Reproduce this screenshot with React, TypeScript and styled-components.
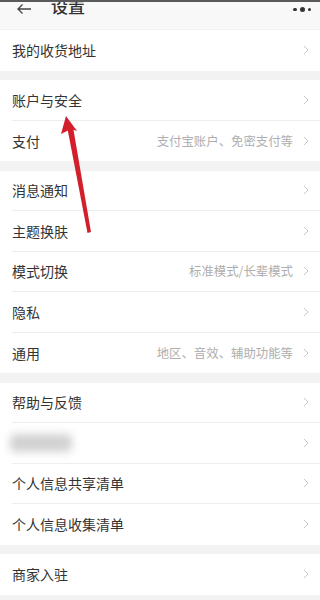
import React from "react";
import styled, { createGlobalStyle } from "styled-components";

const Global = createGlobalStyle`
  html, body { margin: 0; padding: 0; background: #f2f2f2; }
  body { font-family: "Noto Sans CJK SC", "Noto Sans", sans-serif; }
  * { box-sizing: border-box; }
`;

const Page = styled.div`
  position: relative;
  width: 320px;
  height: 600px;
  overflow: hidden;
  background: #f2f2f2;
  display: flex;
  flex-direction: column;
`;

const TopEdge = styled.div`
  height: 2px;
  background: #5a5a5a;
  flex: none;
`;

const Header = styled.div`
  height: 27px;
  flex: none;
  background: #f8f8f8;
  display: flex;
  align-items: flex-start;
  padding: 0 9px 0 16px;
  overflow: hidden;
`;

const Back = styled.div`
  width: 18px;
  height: 14px;
  margin-top: 1px;
  display: flex;
`;

const Title = styled.div`
  margin-left: 17px;
  margin-top: -7px;
  font-size: 17px;
  line-height: 22px;
  color: #333;
  font-weight: 500;
  flex: 1;
`;

const Dots = styled.div`
  display: flex;
  align-items: center;
  gap: 3px;
  margin-top: 5px;
`;

const Dot = styled.span<{ $big?: boolean }>`
  width: ${(p) => (p.$big ? 5 : 3.5)}px;
  height: ${(p) => (p.$big ? 5 : 3.5)}px;
  border-radius: 50%;
  background: #333;
`;

const Groups = styled.div`
  display: flex;
  flex-direction: column;
  gap: 9.5px;
  padding-top: 1px;
`;

const Group = styled.div`
  background: #fff;
  display: flex;
  flex-direction: column;
`;

const Row = styled.div<{ $last?: boolean }>`
  height: 40.5px;
  margin-left: 12px;
  padding-right: 11px;
  display: flex;
  align-items: center;
  border-bottom: ${(p) => (p.$last ? "none" : "1px solid #eeeeee")};
`;

const Label = styled.div`
  flex: 1;
  font-size: 14px;
  color: #333;
`;

const Hint = styled.div`
  font-size: 12.4px;
  color: #aeaeae;
  margin-right: 10px;
`;

const Blur = styled.div`
  width: 62px;
  height: 18px;
  margin-left: -2px;
  background: #d2d2d2;
  border-radius: 5px;
  filter: blur(4px);
`;

const Spacer = styled.div`
  flex: 1;
`;

const ArrowLayer = styled.svg`
  position: absolute;
  left: 0;
  top: 0;
  pointer-events: none;
`;

const Chevron = () => (
  <svg width="6" height="10" viewBox="0 0 6 10">
    <path d="M1 1l4 4-4 4" fill="none" stroke="#c8c8c8" strokeWidth="1" />
  </svg>
);

type Item = { label?: string; hint?: string; blur?: boolean };

const groups: Item[][] = [
  [{ label: "我的收货地址" }],
  [{ label: "账户与安全" }, { label: "支付", hint: "支付宝账户、免密支付等" }],
  [
    { label: "消息通知" },
    { label: "主题换肤" },
    { label: "模式切换", hint: "标准模式/长辈模式" },
    { label: "隐私" },
    { label: "通用", hint: "地区、音效、辅助功能等" },
  ],
  [
    { label: "帮助与反馈" },
    { blur: true },
    { label: "个人信息共享清单" },
    { label: "个人信息收集清单" },
  ],
  [{ label: "商家入驻" }],
];

export default function App() {
  return (
    <Page>
      <Global />
      <TopEdge />
      <Header>
        <Back>
          <svg width="16" height="12" viewBox="0 0 16 12">
            <path d="M15 6H2M6.5 1.5L2 6l4.5 4.5" fill="none" stroke="#444" strokeWidth="1.3" />
          </svg>
        </Back>
        <Title>设置</Title>
        <Dots>
          <Dot />
          <Dot $big />
          <Dot />
        </Dots>
      </Header>
      <Groups>
        {groups.map((g, gi) => (
          <Group key={gi}>
            {g.map((it, i) => (
              <Row key={i} $last={i === g.length - 1}>
                {it.blur ? (
                  <>
                    <Blur />
                    <Spacer />
                  </>
                ) : (
                  <Label>{it.label}</Label>
                )}
                {it.hint && <Hint>{it.hint}</Hint>}
                <Chevron />
              </Row>
            ))}
          </Group>
        ))}
      </Groups>
      <ArrowLayer width="320" height="600" viewBox="0 0 320 600">
        <path d="M73 127 L91 232 L87.5 233 L67.5 129 Z" fill="#d21f2b" />
        <path d="M66 116 L77 131 L71 129 L61 134 Z" fill="#d21f2b" />
      </ArrowLayer>
    </Page>
  );
}
